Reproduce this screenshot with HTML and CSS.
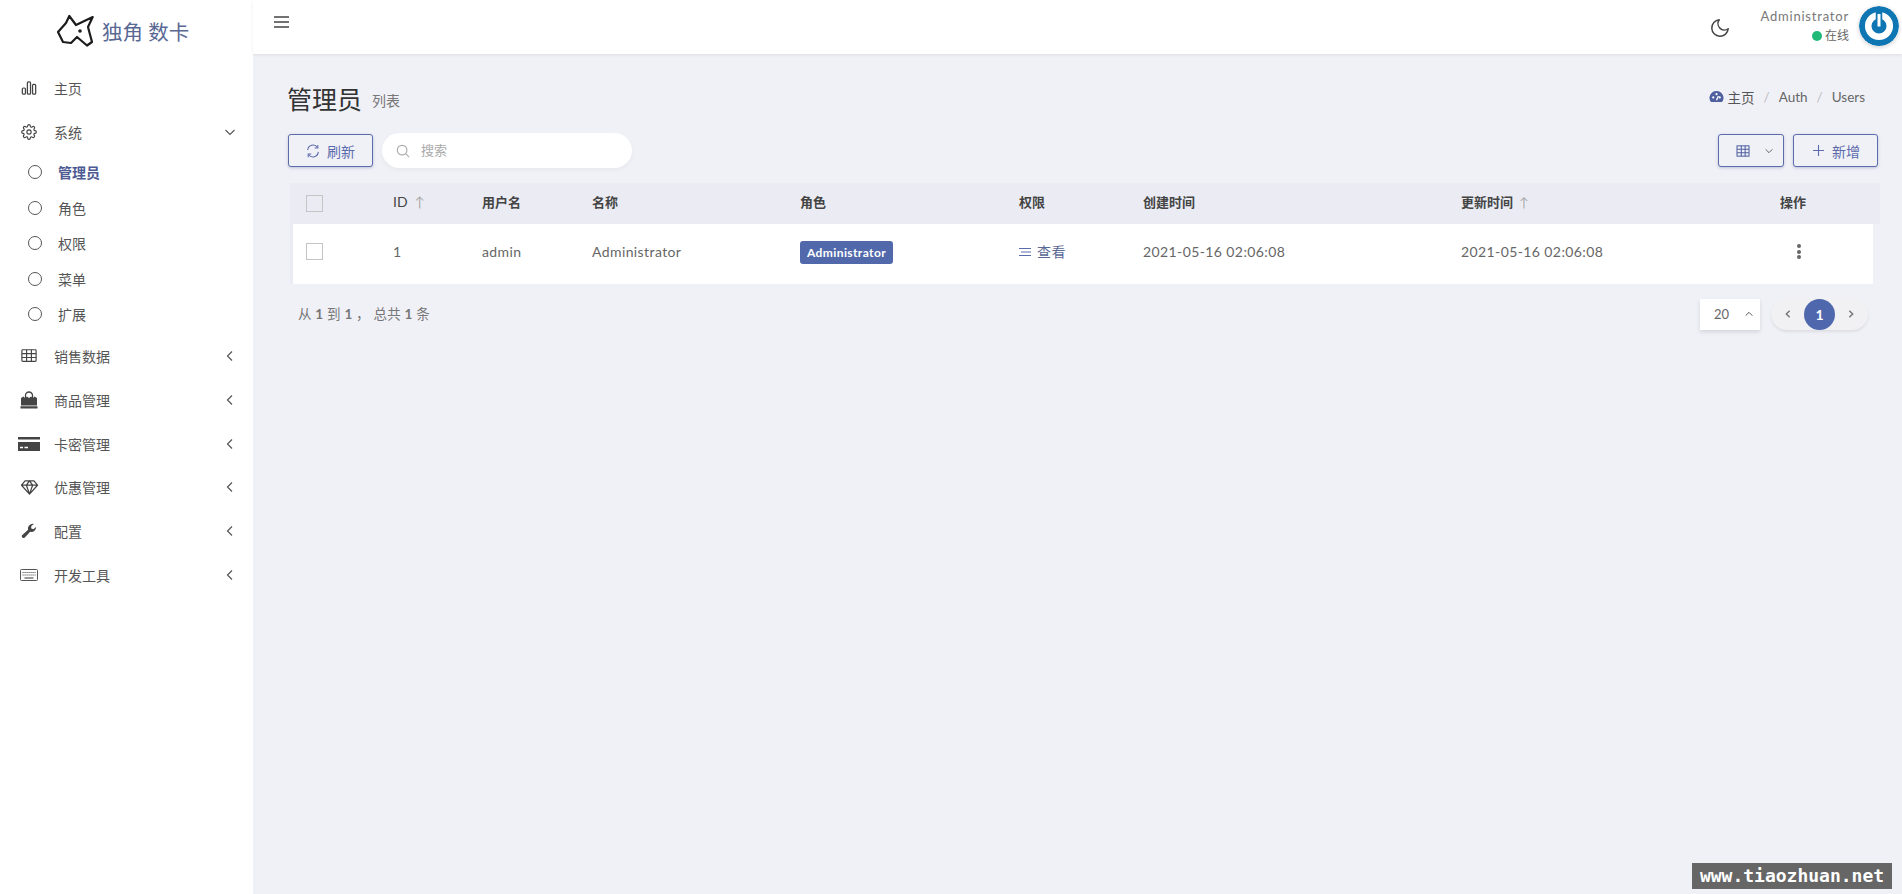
FILE: index.html
```html
<!DOCTYPE html>
<html lang="zh">
	<head>
		<meta charset="utf-8">
		<title>管理员</title>
		<link rel="stylesheet" href="styles.css">
	</head>
	<body>
		<aside class="sidebar">
			<div class="logo">
				<svg class="logo-mark" viewBox="15 15 38 34" width="38" height="34" fill="none" stroke="#1c1c1c" stroke-width="2.2" stroke-linejoin="round" stroke-linecap="round">
					<path d="M51.700 18 L35 26 L28.300 17 L25 24 L17 33 L22 43 L30 44 L36 38 L46 46.500 L51 43 L47 28 Z"/>
					<circle cx="39" cy="32" r="1.800" fill="#1c1c1c" stroke="none"/>
				</svg>
				<span class="logo-text">独角 数卡</span>
			</div>
			<nav class="menu">
				<a class="menu-item">
					<svg class="icon" viewBox="0 0 18 18" fill="none" stroke="#444" stroke-width="1.4"><rect x="1.500" y="9" width="3.500" height="7" rx="1.200"/><rect x="7.200" y="2" width="3.500" height="14" rx="1.200"/><rect x="13" y="5" width="3.500" height="11" rx="1.200"/></svg>
					<span>主页</span>
				</a>
				<a class="menu-item">
					<svg class="icon" viewBox="0 0 24 24" fill="none" stroke="#444" stroke-width="1.7" stroke-linejoin="round"><circle cx="12" cy="12" r="3.200"/><path d="M19.400 15a1.700 1.700 0 0 0 .3 1.800l.1.1a2 2 0 1 1-2.900 2.900l-.1-.1a1.700 1.700 0 0 0-2.800 1.200V21a2 2 0 1 1-4 0v-.1a1.700 1.700 0 0 0-2.900-1.200l-.1.1a2 2 0 1 1-2.800-2.900l.1-.1a1.700 1.700 0 0 0-1.200-2.800H3a2 2 0 1 1 0-4h.1a1.700 1.700 0 0 0 1.200-2.900l-.1-.1a2 2 0 1 1 2.900-2.800l.1.1a1.700 1.700 0 0 0 2.800-1.200V3a2 2 0 1 1 4 0v.1a1.700 1.700 0 0 0 2.900 1.200l.1-.1a2 2 0 1 1 2.800 2.900l-.1.1a1.700 1.700 0 0 0 1.200 2.800h.1a2 2 0 1 1 0 4h-.1a1.700 1.700 0 0 0-1.500 1z"/></svg>
					<span>系统</span>
					<svg class="caret" viewBox="0 0 12 12" fill="none" stroke="#555" stroke-width="1.1"><path d="M1.500 4 L6 8.500 L10.500 4"/></svg>
				</a>
				<div class="submenu">
					<a class="sub-item active"><i class="dot"></i><span>管理员</span></a>
					<a class="sub-item"><i class="dot"></i><span>角色</span></a>
					<a class="sub-item"><i class="dot"></i><span>权限</span></a>
					<a class="sub-item"><i class="dot"></i><span>菜单</span></a>
					<a class="sub-item"><i class="dot"></i><span>扩展</span></a>
				</div>
				<a class="menu-item">
					<svg class="icon" viewBox="0 0 18 18" fill="none" stroke="#444" stroke-width="1.300"><rect x="1" y="2" width="16" height="13" rx="1"/><path d="M1 6.300 H17 M1 10.700 H17 M6.300 2 V15 M11.700 2 V15"/></svg>
					<span>销售数据</span>
					<svg class="caret" viewBox="0 0 12 12" fill="none" stroke="#555" stroke-width="1.200"><path d="M8 1.500 L3.500 6 L8 10.500"/></svg>
				</a>
				<a class="menu-item">
					<svg class="icon icon-bag" viewBox="0 0 18 18" fill="#444"><path d="M1 7 L3.500 5.500 L5 7 L7 5.500 L9 7 L11 5.500 L13 7 L14.500 5.500 L17 7 V14.500 H1 Z M0.500 15.300 H17.500 V17.500 H0.500 Z"/><path d="M5.500 7 V4.500 a3.500 3.500 0 0 1 7 0 V7" fill="none" stroke="#444" stroke-width="1.300"/></svg>
					<span>商品管理</span>
					<svg class="caret" viewBox="0 0 12 12" fill="none" stroke="#555" stroke-width="1.200"><path d="M8 1.500 L3.500 6 L8 10.500"/></svg>
				</a>
				<a class="menu-item">
					<svg class="icon icon-wide" viewBox="0 0 22 16" fill="#444"><path d="M0 1 H22 V3.500 H0 Z M0 6 H22 V15 H0 Z"/><path d="M2 11.500 H5 M6.500 11.500 H10" stroke="#fff" stroke-width="1.300"/></svg>
					<span>卡密管理</span>
					<svg class="caret" viewBox="0 0 12 12" fill="none" stroke="#555" stroke-width="1.200"><path d="M8 1.500 L3.500 6 L8 10.500"/></svg>
				</a>
				<a class="menu-item">
					<svg class="icon icon-gem" viewBox="0 0 20 18" fill="none" stroke="#444" stroke-width="1.400" stroke-linejoin="round"><path d="M5 2 H15 L19 7 L10 17 L1 7 Z M1 7 H19 M6.500 7 L10 17 L13.500 7 L10 2 Z"/></svg>
					<span>优惠管理</span>
					<svg class="caret" viewBox="0 0 12 12" fill="none" stroke="#555" stroke-width="1.200"><path d="M8 1.500 L3.500 6 L8 10.500"/></svg>
				</a>
				<a class="menu-item">
					<svg class="icon" viewBox="0 0 18 18" fill="#444"><path d="M17 4.500 L13.800 7 L11.300 5.800 L11.800 3 L14.600 1 A5.400 5.400 0 0 0 8 7.600 L1.500 13.600 A1.900 1.900 0 0 0 4.300 16.300 L10.300 9.900 A5.400 5.400 0 0 0 17 4.500 Z"/></svg>
					<span>配置</span>
					<svg class="caret" viewBox="0 0 12 12" fill="none" stroke="#555" stroke-width="1.200"><path d="M8 1.500 L3.500 6 L8 10.500"/></svg>
				</a>
				<a class="menu-item">
					<svg class="icon icon-keys" viewBox="0 0 18 14" fill="none" stroke="#555" stroke-width="1"><rect x="0.500" y="1.500" width="17" height="11" rx="1"/><path d="M2.500 4.500 H15.500 M2.500 7 H15.500" stroke-dasharray="1.200 .8"/><path d="M4.500 10 H13.500" stroke-width="1.200"/></svg>
					<span>开发工具</span>
					<svg class="caret" viewBox="0 0 12 12" fill="none" stroke="#555" stroke-width="1.200"><path d="M8 1.500 L3.500 6 L8 10.500"/></svg>
				</a>
			</nav>
		</aside>

		<div class="page">
			<header class="navbar">
				<svg class="burger" viewBox="0 0 16 14" width="16" height="14" stroke="#444" stroke-width="1.600"><path d="M0 2 H15 M0 7 H15 M0 12 H15"/></svg>
				<svg class="moon" viewBox="0 0 24 24" width="22" height="22" fill="none" stroke="#444" stroke-width="1.600" stroke-linejoin="round"><path d="M21 12.800 A9 9 0 1 1 11.200 3 A7 7 0 0 0 21 12.800 Z"/></svg>
				<div class="user">
					<div class="user-name">Administrator</div>
					<div class="user-state"><i class="online"></i>在线</div>
				</div>
				<svg class="avatar" viewBox="0 0 40 40" width="40" height="40">
					<circle cx="20" cy="20" r="20" fill="#0f76b4"/>
					<circle cx="20" cy="20" r="10.800" fill="none" stroke="#fff" stroke-width="6.500"/>
					<path d="M20 5 V21" stroke="#0f76b4" stroke-width="6.500"/>
					<path d="M20 8 V20.500" stroke="#fff" stroke-width="3"/>
				</svg>
			</header>

			<main class="content">
				<div class="title-row">
					<h1>管理员</h1>
					<small>列表</small>
					<div class="breadcrumb">
						<svg viewBox="0 0 16 14" width="15" height="13" fill="#4f5f9f"><path d="M8 1 A7.500 7.500 0 0 0 2 13 H14 A7.500 7.500 0 0 0 8 1 Z"/><circle cx="4.500" cy="8" r="1.200" fill="#fff"/><circle cx="8" cy="4.500" r="1.200" fill="#fff"/><circle cx="11.500" cy="8" r="1.200" fill="#fff"/><path d="M8 11 L10 6.500" stroke="#fff" stroke-width="1.400"/></svg>
						<a class="crumb-home">主页</a>
						<em>/</em><a>Auth</a>
						<em>/</em><a>Users</a>
					</div>
				</div>

				<div class="toolbar">
					<button class="btn btn-refresh">
						<svg viewBox="0 0 16 16" width="14" height="14" fill="none" stroke="#5c6bac" stroke-width="1.200"><path d="M2 7 A6 6 0 0 1 13 4 M14 9 A6 6 0 0 1 3 12"/><path d="M13.500 1 V4.500 H10 M2.500 15 V11.500 H6"/></svg>
						刷新
					</button>
					<div class="search">
						<svg viewBox="0 0 16 16" width="14" height="14" fill="none" stroke="#aaa" stroke-width="1.300"><circle cx="7" cy="7" r="5.500"/><path d="M11 11 L15 15"/></svg>
						<span>搜索</span>
					</div>
					<div class="spacer"></div>
					<button class="btn btn-columns">
						<svg viewBox="0 0 16 14" width="14" height="12" fill="none" stroke="#4f5f9f" stroke-width="1.200"><rect x="1" y="1" width="14" height="12"/><path d="M1 5 H15 M1 9 H15 M6 1 V13 M10.500 1 V13"/></svg>
						<svg viewBox="0 0 12 12" width="10" height="10" fill="none" stroke="#666" stroke-width="1.200"><path d="M2 4 L6 8 L10 4"/></svg>
					</button>
					<button class="btn btn-add">
						<svg viewBox="0 0 12 12" width="11" height="11" stroke="#5c6bac" stroke-width="1.200"><path d="M6 0 V12 M0 6 H12"/></svg>
						新增
					</button>
				</div>

				<table class="grid">
					<colgroup>
						<col class="c-check"><col class="c-id"><col class="c-user"><col class="c-name"><col class="c-role"><col class="c-perm"><col class="c-created"><col class="c-updated"><col class="c-action">
					</colgroup>
					<thead>
						<tr>
							<th><i class="check"></i></th>
							<th class="plain">ID <span class="sort">↑</span></th>
							<th>用户名</th>
							<th>名称</th>
							<th>角色</th>
							<th>权限</th>
							<th>创建时间</th>
							<th>更新时间 <span class="sort">↑</span></th>
							<th>操作</th>
						</tr>
					</thead>
					<tbody>
						<tr>
							<td><i class="check"></i></td>
							<td>1</td>
							<td>admin</td>
							<td>Administrator</td>
							<td class="cell-label"><span class="label">Administrator</span></td>
							<td class="perm">
								<svg viewBox="0 0 12 10" width="12" height="10" stroke="#5c6bac" stroke-width="1.100"><path d="M0 1.500 H12 M2 5 H12 M0 8.500 H12"/></svg>
								查看
							</td>
							<td>2021-05-16 02:06:08</td>
							<td>2021-05-16 02:06:08</td>
							<td class="more"><i></i><i></i><i></i></td>
						</tr>
					</tbody>
				</table>

				<div class="foot">
					<div class="total">从 <b>1</b> 到 <b>1</b> ， 总共 <b>1</b> 条</div>
					<div class="per-page">
						<span>20</span>
						<svg viewBox="0 0 12 12" width="10" height="10" fill="none" stroke="#555" stroke-width="1.200"><path d="M2 8 L6 4 L10 8"/></svg>
					</div>
					<div class="pager">
						<svg viewBox="0 0 12 12" width="10" height="10" fill="none" stroke="#777" stroke-width="1.800"><path d="M8 2 L4 6 L8 10"/></svg>
						<span class="current">1</span>
						<svg viewBox="0 0 12 12" width="10" height="10" fill="none" stroke="#777" stroke-width="1.800"><path d="M4 2 L8 6 L4 10"/></svg>
					</div>
				</div>
			</main>
		</div>

		<div class="watermark">www.tiaozhuan.net</div>
	</body>
</html>
```

FILE: styles.css
```css
* {
	box-sizing: border-box;
}

html, body {
	height: 100%;
}

body {
	margin: 0;
	display: flex;
	min-height: 894px;
	overflow: hidden;
	background: #f0f1f7;
	color: #555;
	font-family: "Lato", "Noto Sans CJK SC", sans-serif;
	font-size: 14px;
}

svg {
	flex: none;
	display: block;
}

/* sidebar */
.sidebar {
	width: 253px;
	flex: none;
	background: #fff;
}

.logo {
	height: 54px;
	display: flex;
	align-items: center;
	padding: 8px 0 0 56px;
	gap: 8px;
}

.logo-text {
	font-size: 20.500px;
	color: #5a6894;
}

.menu {
	padding-top: 12px;
}

.menu-item {
	height: 43.800px;
	display: flex;
	align-items: center;
	padding-left: 21px;
	padding-right: 17px;
	color: #555;
}

.icon {
	width: 16px;
	height: 16px;
	margin-right: 17px;
}

.icon-bag {
	width: 18px;
	height: 18px;
	margin-left: -1px;
	margin-right: 16px;
}

.icon-wide {
	width: 22px;
	margin-left: -3px;
	margin-right: 14px;
}

.icon-gem {
	width: 19px;
	margin-left: -1px;
	margin-right: 15px;
}

.icon-keys {
	width: 18px;
	margin-left: -1px;
	margin-right: 16px;
}

.caret {
	width: 12px;
	height: 12px;
	margin-left: auto;
}

.submenu {
	padding: 1px 0 2px;
}

.sub-item {
	height: 35.500px;
	display: flex;
	align-items: center;
	padding-left: 28px;
	color: #555;
}

.dot {
	width: 14px;
	height: 14px;
	margin-right: 16px;
	border: 1.400px solid #555;
	border-radius: 50%;
}

.active {
	color: #4c5a92;
	font-weight: 700;
}

/* top bar */
.page {
	flex: 1;
	min-width: 0;
}

.navbar {
	height: 54px;
	display: flex;
	align-items: flex-start;
	padding: 15px 3px 0 21px;
	background: #fff;
	box-shadow: 0 1px 3px rgba(0, 0, 0, .08);
}

.moon {
	margin: 2px 0 0 auto;
}

.user {
	margin: -8px 10px 0 29px;
	text-align: right;
	font-size: 13px;
	line-height: 19px;
	color: #777;
}

.user-name {
	letter-spacing: .8px;
}

.user-state {
	display: flex;
	align-items: center;
	justify-content: flex-end;
	font-size: 12px;
	color: #666;
}

.online {
	width: 10px;
	height: 10px;
	margin-right: 3px;
	border-radius: 50%;
	background: #21b978;
}

.avatar {
	margin-top: -9px;
	box-shadow: 0 1px 4px rgba(0, 0, 0, .2);
	border-radius: 50%;
}

/* content */
.content {
	padding: 27px 24px 0 35px;
}

.title-row {
	height: 34px;
	display: flex;
	align-items: center;
}

h1 {
	margin: 0 0 0 -1px;
	font-size: 25px;
	font-weight: 400;
	color: #333;
}

small {
	margin: 3px 0 0 10px;
	font-size: 14px;
	color: #777;
}

.breadcrumb {
	margin: -3px 13px 0 auto;
	display: flex;
	align-items: center;
	gap: 9px;
	font-size: 13.500px;
	color: #666;
}

.breadcrumb em {
	color: #bbb;
	font-style: normal;
}

.crumb-home {
	margin-left: -5px;
	color: #555;
}

.toolbar {
	display: flex;
	align-items: center;
	margin-top: 18px;
	gap: 9px;
}

.spacer {
	flex: 1;
}

.btn {
	height: 33px;
	display: flex;
	align-items: center;
	justify-content: center;
	padding: 0;
	border: 1px solid #5c6bac;
	border-radius: 3px;
	background: #f0f1f7;
	box-shadow: 0 1px 3px rgba(70, 80, 140, .3);
	color: #5c6bac;
	font-family: inherit;
	font-size: 14px;
}

.btn-refresh {
	width: 85px;
	gap: 7px;
}

.btn-columns {
	width: 66px;
	gap: 14px;
	padding-left: 8px;
}

.btn-add {
	width: 85px;
	gap: 8px;
	padding-left: 2px;
}

.search {
	width: 250px;
	height: 35px;
	display: flex;
	align-items: center;
	gap: 11px;
	padding-left: 14px;
	border-radius: 18px;
	background: #fff;
	box-shadow: 0 2px 5px rgba(0, 0, 0, .04);
	font-size: 13px;
	color: #aaa;
}

.search span {
	margin-bottom: 2px;
}

.grid {
	width: 1590px;
	margin: 15px 0 0 2px;
	table-layout: fixed;
	border-collapse: collapse;
}

.c-check { width: 103px; }
.c-id { width: 89px; }
.c-user { width: 110px; }
.c-name { width: 208px; }
.c-role { width: 219px; }
.c-perm { width: 124px; }
.c-created { width: 318px; }
.c-updated { width: 319px; }

th, td {
	text-align: left;
	padding: 0 0 5px;
	font-size: 14px;
}

thead tr {
	height: 41px;
	background: #ebecf3;
}

th {
	color: #444;
	font-size: 13px;
	font-weight: 700;
}

th.plain {
	font-size: 14px;
	font-weight: 400;
}

th:first-child {
	padding: 0 0 0 16px;
}

td:first-child {
	padding-left: 16px;
}

tbody tr {
	height: 60px;
	background: #fff;
	box-shadow: inset 3px 0 0 #ebecf3, inset -7px 0 0 #f0f1f7;
	color: #666;
}

td {
	letter-spacing: .4px;
}

td.cell-label {
	padding: 0 0 3px;
}

.sort {
	margin-left: 3px;
	font-weight: 400;
	color: #aaa;
}

.check {
	display: block;
	width: 17px;
	height: 17px;
	border: 1.500px solid #c4c4c4;
}

.label {
	display: inline-block;
	padding: 0 7px;
	height: 23px;
	line-height: 23px;
	border-radius: 3px;
	background: #5169ab;
	color: #fff;
	font-size: 12px;
	font-weight: 700;
}

td.perm {
	color: #5a6894;
	padding-bottom: 6px;
}

td.perm svg {
	display: inline-block;
	margin-right: 2px;
}

.more i {
	display: block;
	width: 4px;
	height: 4px;
	margin: 1.500px 0 1.500px 17px;
	border-radius: 50%;
	background: #666;
}

.foot {
	display: flex;
	align-items: center;
	margin-top: 14px;
	height: 32px;
}

.total {
	margin: 0 auto 2px 10px;
	font-size: 13.500px;
	letter-spacing: .2px;
	color: #777;
}

.per-page {
	width: 60px;
	height: 31px;
	display: flex;
	align-items: center;
	justify-content: space-between;
	padding: 0 6px 0 14px;
	background: #fff;
	box-shadow: 0 2px 4px rgba(0, 0, 0, .12);
	font-size: 13px;
	color: #666;
}

.pager {
	width: 97px;
	height: 32px;
	margin: 0 10px 0 11px;
	display: flex;
	align-items: center;
	justify-content: space-between;
	padding: 0 12px;
	border-radius: 16px;
	background: #f1f1f3;
	box-shadow: 0 2px 3px rgba(0, 0, 0, .08);
}

.current {
	width: 31px;
	height: 31px;
	border-radius: 50%;
	background: #4f68ad;
	color: #fff;
	font-weight: 700;
	text-align: center;
	line-height: 31px;
}

.watermark {
	position: absolute;
	left: 1692px;
	top: 863px;
	width: 200px;
	height: 26px;
	background: #666;
	color: #fff;
	font-family: "DejaVu Sans Mono", monospace;
	font-size: 18px;
	font-weight: 700;
	line-height: 26px;
	text-align: center;
	white-space: nowrap;
}
```
